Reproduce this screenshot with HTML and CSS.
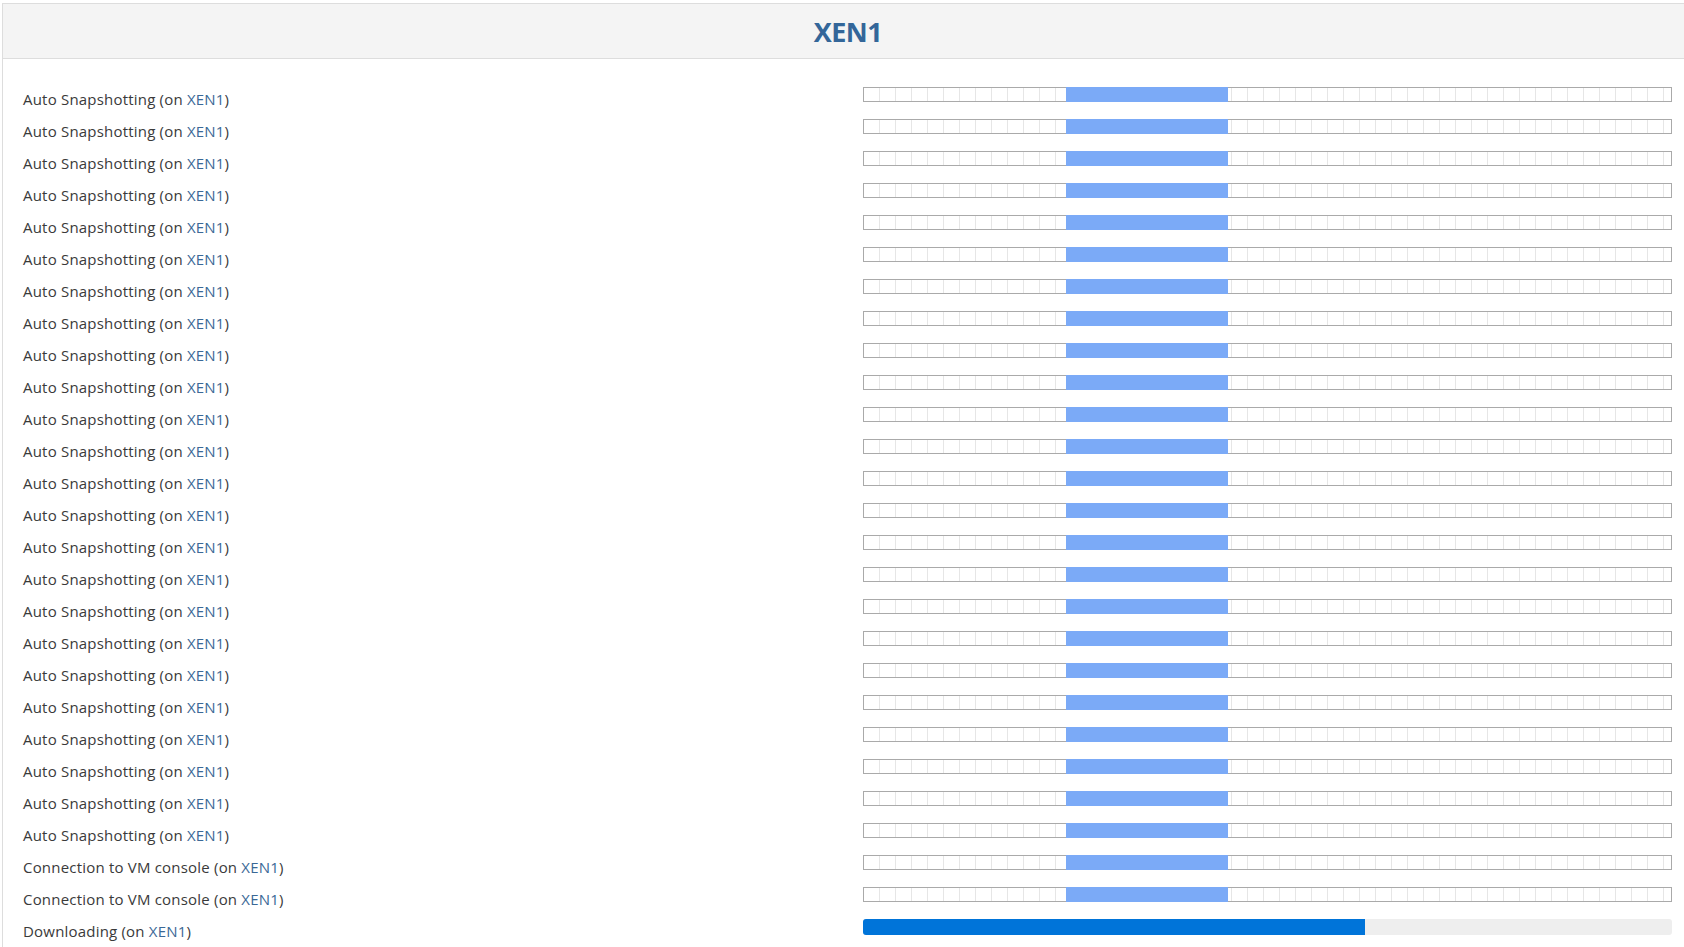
FILE: index.html
```html
<!DOCTYPE html>
<html lang="en">
<head>
    <meta charset="UTF-8">
    <title>XEN1 - Tasks</title>
    <link rel="stylesheet" href="styles.css">
</head>
<body>
    <div class="panel">
        <div class="panel-heading">
            <h2 class="panel-title">XEN1</h2>
        </div>
        <div class="panel-body">
            <div class="task"><span class="task-name">Auto Snapshotting (on <a href="#">XEN1</a>)</span><div class="progress indeterminate"><span class="pulse"></span></div></div>
            <div class="task"><span class="task-name">Auto Snapshotting (on <a href="#">XEN1</a>)</span><div class="progress indeterminate"><span class="pulse"></span></div></div>
            <div class="task"><span class="task-name">Auto Snapshotting (on <a href="#">XEN1</a>)</span><div class="progress indeterminate"><span class="pulse"></span></div></div>
            <div class="task"><span class="task-name">Auto Snapshotting (on <a href="#">XEN1</a>)</span><div class="progress indeterminate"><span class="pulse"></span></div></div>
            <div class="task"><span class="task-name">Auto Snapshotting (on <a href="#">XEN1</a>)</span><div class="progress indeterminate"><span class="pulse"></span></div></div>
            <div class="task"><span class="task-name">Auto Snapshotting (on <a href="#">XEN1</a>)</span><div class="progress indeterminate"><span class="pulse"></span></div></div>
            <div class="task"><span class="task-name">Auto Snapshotting (on <a href="#">XEN1</a>)</span><div class="progress indeterminate"><span class="pulse"></span></div></div>
            <div class="task"><span class="task-name">Auto Snapshotting (on <a href="#">XEN1</a>)</span><div class="progress indeterminate"><span class="pulse"></span></div></div>
            <div class="task"><span class="task-name">Auto Snapshotting (on <a href="#">XEN1</a>)</span><div class="progress indeterminate"><span class="pulse"></span></div></div>
            <div class="task"><span class="task-name">Auto Snapshotting (on <a href="#">XEN1</a>)</span><div class="progress indeterminate"><span class="pulse"></span></div></div>
            <div class="task"><span class="task-name">Auto Snapshotting (on <a href="#">XEN1</a>)</span><div class="progress indeterminate"><span class="pulse"></span></div></div>
            <div class="task"><span class="task-name">Auto Snapshotting (on <a href="#">XEN1</a>)</span><div class="progress indeterminate"><span class="pulse"></span></div></div>
            <div class="task"><span class="task-name">Auto Snapshotting (on <a href="#">XEN1</a>)</span><div class="progress indeterminate"><span class="pulse"></span></div></div>
            <div class="task"><span class="task-name">Auto Snapshotting (on <a href="#">XEN1</a>)</span><div class="progress indeterminate"><span class="pulse"></span></div></div>
            <div class="task"><span class="task-name">Auto Snapshotting (on <a href="#">XEN1</a>)</span><div class="progress indeterminate"><span class="pulse"></span></div></div>
            <div class="task"><span class="task-name">Auto Snapshotting (on <a href="#">XEN1</a>)</span><div class="progress indeterminate"><span class="pulse"></span></div></div>
            <div class="task"><span class="task-name">Auto Snapshotting (on <a href="#">XEN1</a>)</span><div class="progress indeterminate"><span class="pulse"></span></div></div>
            <div class="task"><span class="task-name">Auto Snapshotting (on <a href="#">XEN1</a>)</span><div class="progress indeterminate"><span class="pulse"></span></div></div>
            <div class="task"><span class="task-name">Auto Snapshotting (on <a href="#">XEN1</a>)</span><div class="progress indeterminate"><span class="pulse"></span></div></div>
            <div class="task"><span class="task-name">Auto Snapshotting (on <a href="#">XEN1</a>)</span><div class="progress indeterminate"><span class="pulse"></span></div></div>
            <div class="task"><span class="task-name">Auto Snapshotting (on <a href="#">XEN1</a>)</span><div class="progress indeterminate"><span class="pulse"></span></div></div>
            <div class="task"><span class="task-name">Auto Snapshotting (on <a href="#">XEN1</a>)</span><div class="progress indeterminate"><span class="pulse"></span></div></div>
            <div class="task"><span class="task-name">Auto Snapshotting (on <a href="#">XEN1</a>)</span><div class="progress indeterminate"><span class="pulse"></span></div></div>
            <div class="task"><span class="task-name">Auto Snapshotting (on <a href="#">XEN1</a>)</span><div class="progress indeterminate"><span class="pulse"></span></div></div>
            <div class="task"><span class="task-name">Connection to VM console (on <a href="#">XEN1</a>)</span><div class="progress indeterminate"><span class="pulse"></span></div></div>
            <div class="task"><span class="task-name">Connection to VM console (on <a href="#">XEN1</a>)</span><div class="progress indeterminate"><span class="pulse"></span></div></div>
            <div class="task"><span class="task-name">Downloading (on <a href="#">XEN1</a>)</span><div class="progress"><span class="progress-bar" style="width: 62%"></span></div></div>
        </div>
    </div>
</body>
</html>
```

FILE: styles.css
```css
* {
    margin: 0;
    padding: 0;
    box-sizing: border-box;
}

body {
    font-family: 'Open Sans', 'Liberation Sans', sans-serif;
    font-size: 15px;
    letter-spacing: 0.2px;
    color: #3a3a3a;
    background: #fff;
    overflow: hidden;
    height: 947px;
}

a {
    color: #3a6896;
    text-decoration: none;
}

.panel {
    margin: 3px 0 0 2px;
    width: 1692px;
    border: 1px solid #ddd;
    border-bottom: none;
}

.panel-heading {
    background: #f4f4f4;
    border-bottom: 1px solid #ddd;
    height: 55px;
    display: flex;
    align-items: center;
    justify-content: center;
}

.panel-title {
    font-size: 27px;
    font-weight: 700;
    letter-spacing: -0.5px;
    color: #336699;
    margin-top: 1px;
}

.panel-body {
    padding: 25px 21px 0 20px;
}

.task {
    display: flex;
    align-items: flex-start;
    height: 32px;
}

.task-name {
    flex: 1;
    line-height: 30px;
    white-space: nowrap;
}

.progress {
    width: 809px;
    height: 16px;
    margin-top: 3px;
    background: #eee;
    border-radius: 3px;
    position: relative;
}

.progress-bar {
    display: block;
    height: 100%;
    background: #0074d9;
    border-radius: 3px 0 0 3px;
}

.progress.indeterminate {
    height: 15px;
    border: 1px solid #aaa;
    border-radius: 0;
    background: #fff repeating-linear-gradient(to right, transparent 0, transparent 15px, #e6e6e6 15px, #e6e6e6 16px);
}

.pulse {
    position: absolute;
    top: -1px;
    bottom: -1px;
    left: 202px;
    width: 162px;
    background: #7baaf7;
}
```
